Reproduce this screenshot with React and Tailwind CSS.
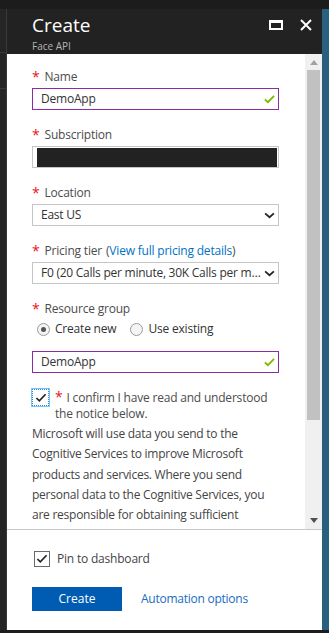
import React from "react";

const font = { fontFamily: '"Open Sans", "Noto Sans", sans-serif' };

function Label({ children, link }) {
  return (
    <div className="flex h-[16px] items-center text-[12px] leading-[16px] tracking-[-0.2px] text-[#4c4c4c] whitespace-nowrap">
      <span className="mr-[5px] text-[14px] text-[#e81123]">*</span>
      <span>{children}</span>
      {link}
    </div>
  );
}

function Check() {
  return (
    <svg viewBox="0 0 12 10" className="h-[10px] w-[11px]">
      <path d="M1 5.5 L4.3 8.5 L11 1.5" fill="none" stroke="#7fba00" strokeWidth="2" />
    </svg>
  );
}

function Chevron() {
  return (
    <svg viewBox="0 0 12 8" className="h-[7px] w-[11px]">
      <path d="M1 1.5 L6 6 L11 1.5" fill="none" stroke="#222" strokeWidth="2" />
    </svg>
  );
}

function Tick() {
  return (
    <svg viewBox="0 0 14 12" className="h-[10px] w-[12px]">
      <path d="M1.5 6 L5 9.5 L12.5 1.5" fill="none" stroke="#222" strokeWidth="2" />
    </svg>
  );
}

function ValidInput({ value, className = "" }) {
  return (
    <div className={`flex h-[22px] items-center justify-between border border-[#8a2da5] pl-[8px] pr-[3px] text-[12px] tracking-[-0.2px] text-[#333] ${className}`}>
      <span>{value}</span>
      <Check />
    </div>
  );
}

function Select({ value }) {
  return (
    <div className="mt-[3px] flex h-[22px] items-center justify-between border border-[#c6c6c6] pl-[8px] pr-[3px] text-[12px] tracking-[-0.25px] text-[#333]">
      <span className="truncate">{value}</span>
      <span className="ml-[2px] shrink-0"><Chevron /></span>
    </div>
  );
}

function Radio({ checked, label }) {
  return (
    <div className="flex items-center">
      <span className="flex h-[13px] w-[13px] items-center justify-center rounded-full border border-[#9a9a9a] bg-[#f4f4f4]">
        {checked && <span className="h-[5px] w-[5px] rounded-full bg-[#555]" />}
      </span>
      <span className="ml-[5px]">{label}</span>
    </div>
  );
}

export default function App() {
  return (
    <div style={font} className="flex h-[633px] w-[329px] flex-col overflow-hidden bg-[#1c1c1c]">
      <div className="h-[9px] shrink-0 bg-[#1c1c1c]" />
      <div className="flex min-h-0 flex-1">
        {/* left edge of the blade behind */}
        <div className="flex w-[7px] shrink-0 flex-col border-r border-[#3a3a3a] bg-[#252525]">
          <div className="h-[44px] border-b border-[#3a3a3a]" />
          <div className="h-[36px] border-b border-[#3a3a3a]" />
        </div>

        <div className="flex min-w-0 flex-1 flex-col bg-white">
          {/* Header */}
          <div className="flex h-[45px] shrink-0 bg-[#222] pl-[25px] pr-[10px]">
            <div className="flex-1 pt-[4px]">
              <div className="text-[19px] leading-[24px] text-white">Create</div>
              <div className="mt-[3px] text-[10px] leading-[12px] text-[#b4b4b4]">Face API</div>
            </div>
            <div className="flex items-start gap-[17px] pt-[11px]">
              <span className="h-[10px] w-[14px] border-2 border-t-[3px] border-white" />
              <svg viewBox="0 0 12 12" className="mt-[-1px] h-[12px] w-[12px]">
                <path d="M1 1 L11 11 M11 1 L1 11" stroke="white" strokeWidth="2" />
              </svg>
            </div>
          </div>

          {/* Body */}
          <div className="flex min-h-0 flex-1">
            <div className="min-w-0 flex-1 overflow-hidden pl-[25px] pr-[26px] pt-[15px]">
              <Label>Name</Label>
              <ValidInput value="DemoApp" className="mt-[3px]" />

              <div className="mt-[17px]">
                <Label>Subscription</Label>
                <div className="mt-[3px] h-[22px] border border-[#c6c6c6] pl-[4px] pr-[1px] pt-[1px]">
                  <div className="h-full bg-[#222]" />
                </div>
              </div>

              <div className="mt-[17px]">
                <Label>Location</Label>
                <Select value="East US" />
              </div>

              <div className="mt-[17px]">
                <Label
                  link={
                    <span className="ml-[4px]">
                      (<span className="text-[#0072c6]">View full pricing details</span>)
                    </span>
                  }
                >
                  Pricing tier
                </Label>
                <Select value="F0 (20 Calls per minute, 30K Calls per month)" />
              </div>

              <div className="mt-[17px]">
                <Label>Resource group</Label>
                <div className="mt-[3px] flex h-[18px] items-center gap-[14px] pl-[5px] text-[12px] tracking-[-0.2px] text-[#333]">
                  <Radio checked label="Create new" />
                  <Radio label="Use existing" />
                </div>
                <ValidInput value="DemoApp" className="mt-[13px]" />
              </div>

              <div className="mt-[16px] flex">
                <span className="flex h-[17px] w-[17px] shrink-0 items-center justify-center border border-dotted border-[#1e90d8] outline outline-1 outline-[#7fc4ee]">
                  <Tick />
                </span>
                <p className="ml-[6px] pt-[1px] text-[12px] leading-[16px] tracking-[-0.2px] text-[#4c4c4c]">
                  <span className="mr-[4px] text-[14px] leading-[14px] text-[#e81123]">*</span>
                  I confirm I have read and understood the notice below.
                </p>
              </div>

              <p className="mt-[2px] text-[12px] leading-[20.3px] tracking-[-0.25px] text-[#444]">
                Microsoft will use data you send to the Cognitive Services to improve Microsoft
                products and services. Where you send personal data to the Cognitive Services, you
                are responsible for obtaining sufficient consent from the data subjects. The General
                Privacy and Security Terms in the Online Services Terms do not apply.
              </p>
            </div>

            {/* Scrollbar */}
            <div className="flex w-[17px] shrink-0 flex-col items-center bg-[#f0f0f0]">
              <svg viewBox="0 0 8 5" className="mt-[6px] h-[5px] w-[8px]">
                <path d="M0 5 L4 0 L8 5 Z" fill="#a3a3a3" />
              </svg>
              <div className="mt-[5px] h-[350px] w-[13px] bg-[#c1c1c1]" />
              <div className="flex-1" />
              <svg viewBox="0 0 8 5" className="mb-[6px] h-[5px] w-[8px]">
                <path d="M0 0 L8 0 L4 5 Z" fill="#505050" />
              </svg>
            </div>
          </div>

          {/* Footer */}
          <div className="h-[101px] shrink-0 border-t border-[#c8c8c8] pl-[25px] pt-[21px]">
            <div className="flex h-[16px] items-center text-[12px] tracking-[-0.2px] text-[#444]">
              <span className="ml-[2px] flex h-[16px] w-[16px] items-center justify-center border border-[#6a6a6a]">
                <Tick />
              </span>
              <span className="ml-[7px]">Pin to dashboard</span>
            </div>
            <div className="mt-[20px] flex items-center">
              <button className="h-[24px] w-[90px] bg-[#005cb3] text-[12px] text-white">Create</button>
              <span className="ml-[19px] text-[12px] tracking-[-0.25px] text-[#1a6cc0]">Automation options</span>
            </div>
          </div>
        </div>

        <div className="w-[7px] shrink-0 bg-[#295f7f]" />
      </div>
      <div className="h-[3px] shrink-0 bg-[#1c1c1c]" />
    </div>
  );
}
